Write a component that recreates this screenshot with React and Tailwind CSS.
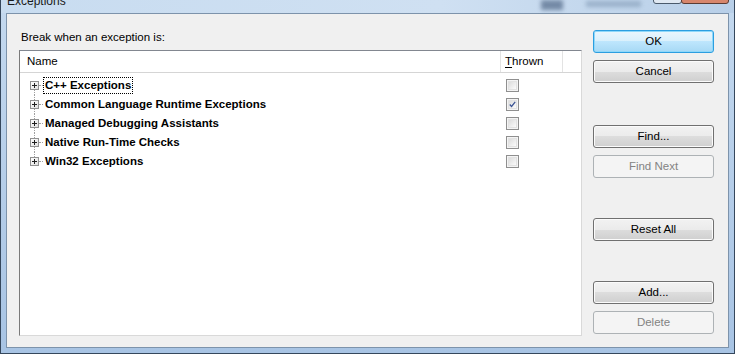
import React from "react";

const items = [
  { name: "C++ Exceptions", thrown: false, focus: true },
  { name: "Common Language Runtime Exceptions", thrown: true },
  { name: "Managed Debugging Assistants", thrown: false },
  { name: "Native Run-Time Checks", thrown: false },
  { name: "Win32 Exceptions", thrown: false },
];

const Button = ({ label, variant = "normal", className = "" }) => {
  const styles = {
    normal:
      "border-[#707070] text-black bg-[linear-gradient(to_bottom,#f2f2f2_0%,#ebebeb_50%,#dddddd_50%,#cfcfcf_100%)] shadow-[inset_0_0_0_1px_#fbfbfb]",
    default:
      "border-[#2c9ee0] text-black bg-[linear-gradient(to_bottom,#eaf6fd_0%,#d9f0fc_50%,#bee6fd_50%,#a7d9f5_100%)] shadow-[inset_0_0_0_1px_#8fd8fa]",
    disabled: "border-[#adb2b5] text-[#838383] bg-[#f4f4f4]",
  };
  return (
    <div
      className={`h-[23px] w-full rounded-[3px] border flex items-center justify-center ${styles[variant]} ${className}`}
    >
      {label}
    </div>
  );
};

const Checkbox = ({ checked }) => (
  <div className="w-[13px] h-[13px] border border-[#8f8f8f] bg-[#f4f4f4] p-[1px]">
    <div className="w-full h-full bg-[linear-gradient(135deg,#dcdcdc,#fbfbfb)] border border-[#e2e2e2] flex items-center justify-center">
      {checked && (
        <svg width="9" height="9" viewBox="0 0 9 9">
          <path d="M1 4.5 L3.3 7 L8 1.2" fill="none" stroke="#3a5394" strokeWidth="1.6" />
        </svg>
      )}
    </div>
  </div>
);

const Expander = () => (
  <div className="w-[9px] h-[9px] border border-[#919191] bg-[linear-gradient(135deg,#ffffff,#e0e0e0)] flex items-center justify-center">
    <svg width="7" height="7" viewBox="0 0 7 7">
      <path d="M1 3.5 H6 M3.5 1 V6" stroke="#1f1f1f" strokeWidth="1" />
    </svg>
  </div>
);

const Row = ({ item, first, last }) => (
  <div className="h-[19px] flex items-center">
    <div className="w-[481px] h-full flex items-center">
      <div className="w-[19px] h-full flex flex-col items-start pl-[10px]">
        <div className={`h-[5px] ml-[4px] ${first ? "" : "border-l border-dotted border-[#a0a0a0]"}`} />
        <div className="flex items-center">
          <Expander />
          <div className="w-[4px] border-t border-dotted border-[#a0a0a0]" />
        </div>
        <div className={`flex-1 ml-[4px] ${last ? "" : "border-l border-dotted border-[#a0a0a0]"}`} />
      </div>
      <div className={`ml-[4px] px-[1px] h-[17px] leading-[15px] font-bold border border-dotted ${item.focus ? "border-black" : "border-transparent"}`}>
        {item.name}
      </div>
    </div>
    <div className="pl-[5px]">
      <Checkbox checked={item.thrown} />
    </div>
  </div>
);

export default function App() {
  return (
    <div className="w-[735px] h-[354px] overflow-hidden border-x border-b border-[#35475c] bg-[linear-gradient(to_bottom,#c4d9ef,#b3cce8_60%,#a8c4e4)] flex flex-col font-['Liberation_Sans',Arial,sans-serif] text-[11.5px] text-black relative">
      <div className="h-[13px] overflow-hidden flex items-start pl-[6px] text-[12px] text-[#1a1a1a] bg-[linear-gradient(to_right,#c8dcf0,#cfe0f2_60%,#b8cfe8)]">
        <span className="leading-[12px] mt-[-5px]">Exceptions</span>
      </div>
      <div className="absolute top-0 left-[540px] w-[22px] h-[10px] bg-[#3f5677] opacity-60 blur-[2px]" />
      <div className="absolute top-[1px] left-[585px] w-[55px] h-[6px] bg-[#7f98b3] opacity-60 blur-[2px]" />
      <div className="absolute top-[-4px] left-[652px] w-[29px] h-[8px] rounded-b-[3px] border border-[#4a5a6c] bg-[#dfe8f2]" />
      <div className="absolute top-[-4px] left-[680px] w-[48px] h-[8px] rounded-b-[3px] border border-[#5a3c34] bg-[#d7866c]" />
      <div className="flex-1 mx-[5px] mb-[5px] border border-[#7d93ab] bg-[#f0f0f0] flex pl-[12px] pr-[14px]">
        <div className="w-[563px] flex flex-col pt-[15px] pb-[11px]">
          <div className="h-[16px] leading-[16px] pl-[2px]">Break when an exception is:</div>
          <div className="mt-[5px] flex-1 bg-white border border-t-[#828790] border-l-[#7a7a7a] border-r-[#d9d9d9] border-b-[#d9d9d9] flex flex-col">
            <div className="h-[22px] flex items-center border-b border-[#d5d5d5] bg-white">
              <div className="w-[481px] h-full flex items-center pl-[7px] border-r border-[#e3e3e3]">Name</div>
              <div className="w-[62px] h-full flex items-center pl-[4px] border-r border-[#e3e3e3]">
                <span className="underline decoration-1 underline-offset-2 [text-decoration-skip-ink:none]">T</span>hrown
              </div>
            </div>
            <div className="pt-[3px] flex flex-col">
              {items.map((item, i) => (
                <Row key={item.name} item={item} first={i === 0} last={i === items.length - 1} />
              ))}
            </div>
          </div>
        </div>
        <div className="w-[121px] ml-[11px] pt-[16px] flex flex-col">
          <Button label="OK" variant="default" />
          <Button label="Cancel" className="mt-[7px]" />
          <Button label="Find..." className="mt-[42px]" />
          <Button label="Find Next" variant="disabled" className="mt-[7px]" />
          <Button label="Reset All" className="mt-[40px]" />
          <Button label="Add..." className="mt-[40px]" />
          <Button label="Delete" variant="disabled" className="mt-[7px]" />
        </div>
      </div>
    </div>
  );
}
